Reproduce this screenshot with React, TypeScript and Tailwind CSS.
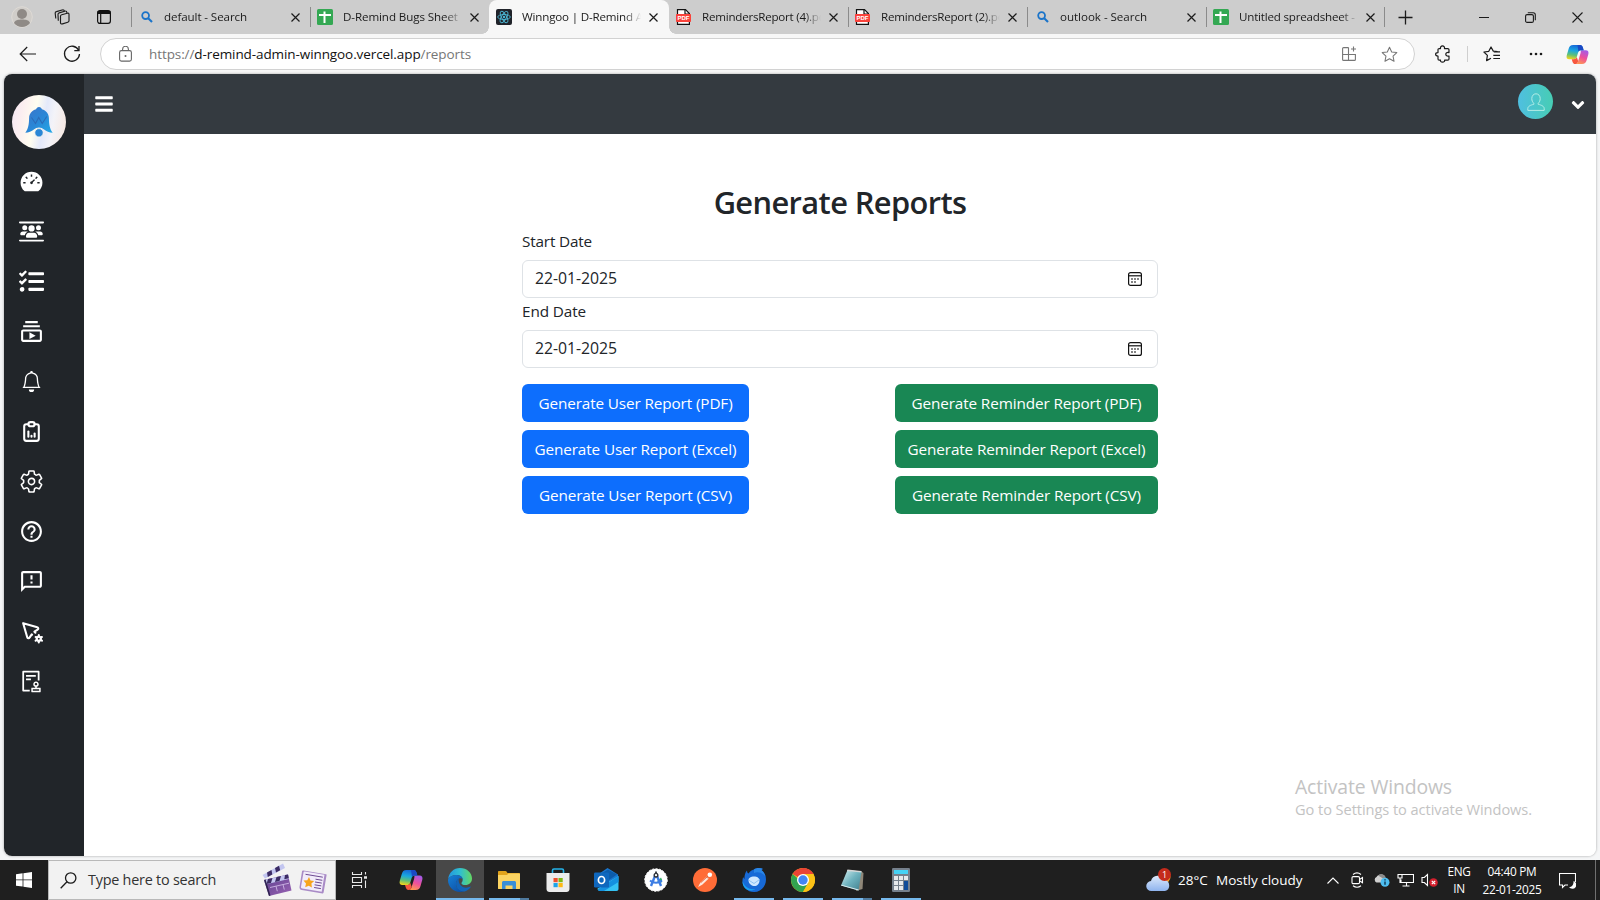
import type { ReactNode } from "react";
import { AiFillDashboard, AiOutlineAudit } from "react-icons/ai";
import { FaUsersBetweenLines } from "react-icons/fa6";
import { FaAngleDown, FaBars, FaTasks } from "react-icons/fa";
import { MdHelpOutline, MdOutlineFeedback, MdOutlineSubscriptions } from "react-icons/md";
import { BsBell } from "react-icons/bs";
import { IoSettingsOutline } from "react-icons/io5";
import { TbPointerCog, TbReportAnalytics } from "react-icons/tb";

/* ---------- browser icons ---------- */

function SearchFavicon() {
  return (
    <svg width="12" height="12" viewBox="0 0 12 12" fill="none" stroke="#1b74c9" strokeWidth="1.8">
      <circle cx="4.6" cy="4.6" r="3.4" />
      <path d="M7.2 7.2 11 11" strokeWidth="2.1" />
    </svg>
  );
}

function SheetFavicon() {
  return (
    <svg width="16" height="16" viewBox="0 0 16 16">
      <rect width="16" height="16" rx="1.5" fill="#34a853" />
      <path d="M2 6h12M7.5 2.5v11.5" stroke="#fff" strokeWidth="2" />
    </svg>
  );
}

function ReactFavicon() {
  return (
    <svg width="16" height="16" viewBox="0 0 16 16" fill="none" stroke="#4cb8d4" strokeWidth="0.9">
      <rect width="16" height="16" rx="2" fill="#20232a" stroke="none" />
      <circle cx="8" cy="8" r="1.2" fill="#4cb8d4" stroke="none" />
      <ellipse cx="8" cy="8" rx="6.3" ry="2.5" />
      <ellipse cx="8" cy="8" rx="6.3" ry="2.5" transform="rotate(60 8 8)" />
      <ellipse cx="8" cy="8" rx="6.3" ry="2.5" transform="rotate(120 8 8)" />
    </svg>
  );
}

function PdfFavicon() {
  return (
    <span className="relative block h-4 w-[15px]">
      <svg width="15" height="16" viewBox="0 0 15 16" className="block">
        <path d="M1.5.6h8l3.9 3.9v10.9H1.5z" fill="#fff" stroke="#111" strokeWidth="1.2" />
        <path d="M9 1v4h4" fill="none" stroke="#111" strokeWidth="1.2" />
        <rect y="5" width="15" height="8" rx="0.8" fill="#f9423a" />
      </svg>
      <span className="absolute inset-x-0 top-[5px] text-center font-['Liberation_Sans'] text-[6px] leading-[8px] font-bold text-white">PDF</span>
    </span>
  );
}

function CloseGlyph() {
  return (
    <svg width="9" height="9" viewBox="0 0 9 9" stroke="#1b1b1b" strokeWidth="1.2">
      <path d="M.5.5l8 8M8.500.5l-8 8" />
    </svg>
  );
}

function CopilotIcon({ size }: { size: number }) {
  return (
    <svg width={size} height={size} viewBox="0 0 24 24">
      <defs>
        <linearGradient id="cpA" x1="0.5" y1="0" x2="0.3" y2="1">
          <stop offset="0" stopColor="#1766d8" />
          <stop offset="0.4" stopColor="#19a7e0" />
          <stop offset="0.7" stopColor="#5cc07a" />
          <stop offset="1" stopColor="#f2d51b" />
        </linearGradient>
        <linearGradient id="cpB" x1="0.7" y1="0" x2="0.3" y2="1">
          <stop offset="0" stopColor="#a45be8" />
          <stop offset="0.5" stopColor="#ee4f9b" />
          <stop offset="1" stopColor="#ff9a4f" />
        </linearGradient>
      </defs>
      <path d="M15 7.5h5.500c2.500 0 3.500 1.700 2.800 4.200l-1.700 6c-.8 2.900-2 4.300-5 4.300H9.500c2 0 2.700-1.600 3.200-3.300l2.300-7.500c.6-1.800.6-3.700 0-3.700z" fill="url(#cpB)" />
      <path d="M7.500 2h7.200c1.600 0 2.400 1.200 2.900 2.800l.8 2.700h-2.700c-1.900 0-2.700 1.300-3.200 3l-1.300 4.200c-.5 1.700-1.500 2.300-3.200 2.300H3.400C.9 17 .1 15.300.8 12.800l1.900-6.500C3.500 3.400 4.600 2 7.500 2z" fill="url(#cpA)" />
      <path d="M14.700 2c1.600 0 2.400 1.200 2.900 2.800l.8 2.700h-2.700c-1.500 0-2.200.6-2.700 1.500L12 2z" fill="#1a49c4" />
      <path d="M9.500 22c-1.600 0-2.300-1.100-2.800-2.700L6 17h2c1.700 0 2.700-.6 3.200-2.300l1.500 4c-.5 1.700-1.200 3.300-3.200 3.300z" fill="#f7573f" />
    </svg>
  );
}

/* ---------- browser chrome ---------- */

type TabInfo = { title: string; icon: ReactNode; text: string; pad: string; line: string };

const tabs: TabInfo[] = [
  { title: "default - Search", icon: <SearchFavicon />, text: "tracking-[-0.1px]", pad: "pl-[9px]", line: "border-[#8b8b8b]" },
  { title: "D-Remind Bugs Sheet", icon: <SheetFavicon />, text: "tracking-[-0.1px]", pad: "pl-[6px]", line: "border-[#8b8b8b]" },
  { title: "Winngoo | D-Remind Admin", icon: <ReactFavicon />, text: "tracking-[-0.18px]", pad: "pl-[7px]", line: "border-transparent" },
  { title: "RemindersReport (4).pdf", icon: <PdfFavicon />, text: "tracking-[-0.23px]", pad: "pl-[6px]", line: "border-transparent" },
  { title: "RemindersReport (2).pdf", icon: <PdfFavicon />, text: "tracking-[-0.23px]", pad: "pl-[6px]", line: "border-[#8b8b8b]" },
  { title: "outlook - Search", icon: <SearchFavicon />, text: "tracking-[-0.04px]", pad: "pl-[9px]", line: "border-[#8b8b8b]" },
  { title: "Untitled spreadsheet - Google", icon: <SheetFavicon />, text: "tracking-[-0.2px]", pad: "pl-[6px]", line: "border-[#8b8b8b]" },
];

function Tab({ tab, active }: { tab: TabInfo; active: boolean }) {
  const body = (
    <>
      <span className={`flex shrink-0 items-center ${active ? "w-[33px]" : "w-8"} ${tab.pad}`}>{tab.icon}</span>
      <span className={`w-[119px] overflow-hidden text-[11.6px] leading-5 whitespace-nowrap text-[#1b1b1b] [mask-image:linear-gradient(to_right,black_86%,transparent)] ${tab.text}`}>{tab.title}</span>
      <span className="ml-[8px] flex">
        <CloseGlyph />
      </span>
    </>
  );
  if (active) {
    return (
      <div className="relative flex h-[34px] w-[180px] shrink-0 items-center rounded-t-[8px] bg-[#f7f7f7]">
        <span className="absolute bottom-0 -left-[7px] size-[7px] bg-[radial-gradient(circle_at_0_0,transparent_6.5px,#f7f7f7_7px)]" />
        <span className="absolute -right-[7px] bottom-0 size-[7px] bg-[radial-gradient(circle_at_100%_0,transparent_6.5px,#f7f7f7_7px)]" />
        {body}
      </div>
    );
  }
  return (
    <div className="flex h-[34px] w-[179px] shrink-0 items-center">
      <span className={`h-5 border-l ${tab.line}`} />
      {body}
    </div>
  );
}

function TabStrip() {
  return (
    <div className="flex h-[34px] items-center bg-[#cdcdcd]">
      <div className="flex w-[131px] shrink-0 items-center">
        <svg width="22" height="22" viewBox="0 0 22 22" className="ml-[11px]">
          <circle cx="11" cy="11" r="10.3" fill="#d0cdc9" stroke="#dedad5" />
          <circle cx="11" cy="8" r="5" fill="#8f8a86" />
          <path d="M3 17c1-3 4-3.500 8-3.500s7 .5 8 3.500c-2 2.500-5 4-8 4s-6-1.500-8-4z" fill="#8f8a86" />
        </svg>
        <svg width="18" height="18" viewBox="0 0 18 18" fill="none" stroke="#1b1b1b" strokeWidth="1.15" strokeLinejoin="round" className="ml-5">
          <path d="M7.5 8.200c0-.8.4-1.300 1.200-1.500l5.600-1.500c1-.3 1.700.2 1.700 1.200v6.300c0 .8-.4 1.300-1.200 1.500l-5.300 1.700c-1.200.4-2-.2-2-1.200z" />
          <path d="M5.300 12.700l-.3-6.200c0-.9.4-1.400 1.200-1.600L12.500 3" />
          <path d="M2.800 10.500l-.6-5.200c-.1-.9.3-1.500 1.200-1.700L10 1.700M12.500 3c.8 0 1.300.6 1.500 2M10 1.700c.8 0 1.200.4 1.400 1.400" />
        </svg>
        <svg width="16" height="16" viewBox="0 0 16 16" fill="none" stroke="#111" strokeWidth="1.2" className="ml-[25px]">
          <rect x="1.600" y="1.600" width="12.800" height="12.800" rx="2.300" />
          <path d="M1.600 3.500h12.800" strokeWidth="3" />
          <path d="M4.700 5v9.500" />
        </svg>
      </div>
      {tabs.map((tab, i) => (
        <Tab key={tab.title} tab={tab} active={i === 2} />
      ))}
      <span className="-ml-px h-5 border-l border-[#8b8b8b]" />
      <svg width="15" height="15" viewBox="0 0 15 15" stroke="#1b1b1b" strokeWidth="1.3" className="ml-[13px]">
        <path d="M7.500.5v14M.5 7.500h14" />
      </svg>
      <div className="ml-auto flex items-center gap-[36px] pr-[17px]">
        <svg width="11" height="10" viewBox="0 0 11 10" stroke="#1b1b1b">
          <path d="M1 5.500h10" />
        </svg>
        <svg width="11" height="11" viewBox="0 0 11 11" fill="none" stroke="#1b1b1b" strokeWidth="1.1">
          <rect x=".6" y="2.600" width="7.800" height="7.800" rx="1.500" />
          <path d="M2.800.7h5.400c1.300 0 2.100.8 2.100 2.100v5.400" />
        </svg>
        <svg width="11" height="11" viewBox="0 0 11 11" stroke="#1b1b1b" strokeWidth="1.1">
          <path d="M.5.5l10 10M10.500.5l-10 10" />
        </svg>
      </div>
    </div>
  );
}

function Toolbar() {
  return (
    <div className="flex h-10 items-center bg-[#f7f7f7]">
      <svg width="18" height="16" viewBox="0 0 18 16" fill="none" stroke="#1b1b1b" strokeWidth="1.2" className="ml-[19px]">
        <path d="M17 8H1.200M8.200 1 1.200 8l7 7" />
      </svg>
      <svg width="18" height="18" viewBox="0 0 18 18" fill="none" stroke="#1b1b1b" strokeWidth="1.3" className="ml-[26px]">
        <path d="M15.700 5.300A7.500 7.500 0 1 0 16.500 9" />
        <path d="M16 1v4.700h-4.700" />
      </svg>
      <div className="ml-[19px] flex h-8 w-[1315px] items-center rounded-full border border-[#d2d2d2] bg-white">
        <svg width="13" height="16" viewBox="0 0 13 16" fill="none" stroke="#666" strokeWidth="1.1" className="ml-[18px]">
          <rect x=".6" y="4.600" width="11.800" height="10.500" rx="1.800" />
          <path d="M3.600 4.500V3.200a2.900 2.900 0 0 1 5.800 0v1.300" />
          <circle cx="6.500" cy="9.900" r="1" fill="#666" stroke="none" />
        </svg>
        <span className="ml-[17px] text-[13.5px] leading-5 tracking-[-0.09px] text-[#767676]">
          https://<span className="text-[#111]">d-remind-admin-winngoo.vercel.app</span>/reports
        </span>
        <div className="ml-auto flex items-center gap-6 pr-[16px]">
          <svg width="16" height="16" viewBox="0 0 16 16" fill="none" stroke="#767676" strokeWidth="1.1">
            <path d="M7.500 1.600H2.600c-.6 0-1 .4-1 1v10.800c0 .6.4 1 1 1h10.800c.6 0 1-.4 1-1V8.500H1.600M7.500 1.600v12.800M12.500.5v5M10 3h5" />
          </svg>
          <svg width="17" height="17" viewBox="0 0 24 24" fill="none" stroke="#767676" strokeWidth="1.5" strokeLinejoin="round">
            <path d="M12 1.800l3.100 6.600 7.200.9-5.300 5 1.400 7.200L12 18l-6.400 3.500L7 14.300l-5.300-5 7.200-.9z" />
          </svg>
        </div>
      </div>
      <svg width="17" height="18" viewBox="0 0 17 18" fill="none" stroke="#1b1b1b" strokeWidth="1.2" strokeLinejoin="round" className="ml-[20px]">
        <path d="M5.500 3.600c-.3-1.700.7-2.700 2-2.700s2.300 1 2 2.700h3.300c.8 0 1.200.4 1.200 1.200v2.800c-2-.5-3.200.4-3.200 1.700s1.200 2.200 3.200 1.700v3c0 .8-.4 1.200-1.200 1.200H9.600c.3 1.200-.7 2-2.100 2s-2.300-.8-2-2H4.200c-.8 0-1.200-.4-1.200-1.200v-3C1.500 11 .6 10.200.6 9.300s.9-1.700 2.400-1.700V4.800c0-.8.4-1.200 1.200-1.200z" />
      </svg>
      <span className="ml-[15px] h-4 border-l border-[#cfcfcf]" />
      <svg width="18" height="17" viewBox="0 0 18 17" fill="none" stroke="#1b1b1b" strokeWidth="1.2" strokeLinejoin="round" className="ml-[15px]">
        <path d="M14.500 5.600l-4.200-.5L8 1 5.800 5.300.9 6l3.500 3.400-.8 5.200L8 12.300M10.800 5.900H17M10.300 9.300H17M10.300 12.500H17" />
      </svg>
      <svg width="14" height="4" viewBox="0 0 14 4" fill="#1b1b1b" className="ml-[28px]">
        <circle cx="2" cy="2" r="1.3" />
        <circle cx="7" cy="2" r="1.3" />
        <circle cx="12" cy="2" r="1.3" />
      </svg>
      <span className="ml-[23px]">
        <CopilotIcon size={23} />
      </span>
    </div>
  );
}

/* ---------- admin page ---------- */

const sideIcons = [
  { Icon: AiFillDashboard, size: 25 },
  { Icon: FaUsersBetweenLines, size: 25 },
  { Icon: FaTasks, size: 25 },
  { Icon: MdOutlineSubscriptions, size: 25 },
  { Icon: BsBell, size: 21 },
  { Icon: TbReportAnalytics, size: 25 },
  { Icon: IoSettingsOutline, size: 25 },
  { Icon: MdHelpOutline, size: 25 },
  { Icon: MdOutlineFeedback, size: 25 },
  { Icon: TbPointerCog, size: 25 },
  { Icon: AiOutlineAudit, size: 25 },
];

function Logo() {
  return (
    <div className="mt-[20.5px] ml-[8px] flex size-[54px] items-center justify-center rounded-full bg-[linear-gradient(100deg,#f3e6f3_0%,#fbeef0_20%,#fffdf0_42%,#e4e9fa_58%,#f3f3f8_72%,#f8e6dc_100%)]">
      <svg width="30" height="32" viewBox="0 0 30 32">
        <defs>
          <linearGradient id="bell" x1="0" y1="0" x2="1" y2="1">
            <stop offset="0" stopColor="#3d74c9" />
            <stop offset="0.5" stopColor="#2a86d6" />
            <stop offset="1" stopColor="#25a9e6" />
          </linearGradient>
        </defs>
        <path d="M15 1c1.600 0 2.600 1 2.900 2.300 4.300 1.200 6.900 4.400 7 8.900.1 6.300.8 10.300 3.800 14.600-3.400-.3-6.300-1.600-8.600-3.300-1.500-1.300-3.200-2-5.100-2s-3.600.7-5.100 2c-2.300 1.700-5.200 3-8.600 3.300 3-4.300 3.700-8.300 3.800-14.600.1-4.500 2.700-7.700 7-8.900C12.400 2 13.400 1 15 1z" fill="url(#bell)" />
        <circle cx="15" cy="26.800" r="4.200" fill="#2a86d6" stroke="#fbf8ec" strokeWidth="0.8" />
        <path d="M7.500 11.500l4 6 3.200-6 3.500 6 4.500-7" fill="none" stroke="#2c6cb8" strokeWidth="1.1" />
      </svg>
    </div>
  );
}

function Sidebar() {
  return (
    <aside className="w-20 shrink-0 bg-[#212529]">
      <Logo />
      <nav className="mt-[8px] flex w-[55px] flex-col text-white">
        {sideIcons.map(({ Icon, size }, i) => (
          <span key={i} className="flex h-[50px] items-center justify-center">
            <Icon size={size} />
          </span>
        ))}
      </nav>
    </aside>
  );
}

function Header() {
  return (
    <header className="flex h-[60px] items-center bg-[#343a40]">
      <FaBars size={20} color="#fff" className="ml-[10px]" />
      <div className="mb-[5px] ml-auto flex size-[35px] items-center justify-center rounded-full bg-[linear-gradient(90deg,#4fbfe0,#47cdb4)]">
        <svg width="18" height="18" viewBox="0 0 18 18" fill="none" stroke="#b4ece6" strokeWidth="1">
          <path d="M6.800 10.200C5.500 9.200 4.800 7.500 4.800 5.600 4.800 2.800 6.500.8 9 .8s4.200 2 4.200 4.800c0 1.900-.7 3.600-2 4.600v1.100c3.400.8 6 2 6 4.300v1.800H.8v-1.800c0-2.300 2.600-3.500 6-4.300z" />
        </svg>
      </div>
      <FaAngleDown size={20} color="#fff" className="mt-[2px] mr-[8px] ml-[15px]" />
    </header>
  );
}

function CalendarIcon() {
  return (
    <svg width="14" height="14" viewBox="0 0 14 14" fill="none" stroke="#111" strokeWidth="1.2">
      <rect x=".6" y=".6" width="12.800" height="12.800" rx="2" />
      <path d="M.6 3.800h12.800" />
      <path d="M3.200 7h1.600M6.200 7h1.600M9.200 7h1.600M3.200 10h1.600M6.200 10h1.600" strokeWidth="1.7" stroke="#333" />
    </svg>
  );
}

function DateField({ label, value, track }: { label: string; value: string; track: string }) {
  return (
    <div>
      <div className={`mb-[7px] pt-px text-[15.3px] leading-6 ${track}`}>{label}</div>
      <div className="flex h-[38px] items-center justify-between rounded-md border border-[#dee2e6] bg-white pr-[15px] pl-3 text-[15.8px] tracking-[-0.05px]">
        <span>{value}</span>
        <CalendarIcon />
      </div>
    </div>
  );
}

const formats = ["PDF", "Excel", "CSV"];

function Reports() {
  return (
    <main className="flex flex-1 justify-center bg-white text-[#212529]">
      <div className="mt-[49px] w-[636px]">
        <h2 className="mb-[7px] text-center text-[30.8px] leading-[38px] font-semibold tracking-[-0.6px]">Generate Reports</h2>
        <DateField label="Start Date" value="22-01-2025" track="tracking-[-0.17px]" />
        <DateField label="End Date" value="22-01-2025" track="tracking-[-0.1px]" />
        <div className="mt-4 flex justify-between text-[15.3px] tracking-[-0.12px] whitespace-nowrap text-white">
          <div className="flex w-[227px] flex-col gap-2">
            {formats.map((f) => (
              <button key={f} className="h-[38px] rounded-md bg-[#0d6efd]">
                Generate User Report ({f})
              </button>
            ))}
          </div>
          <div className="flex w-[263px] flex-col gap-2">
            {formats.map((f) => (
              <button key={f} className="h-[38px] rounded-md bg-[#198754]">
                Generate Reminder Report ({f})
              </button>
            ))}
          </div>
        </div>
      </div>
    </main>
  );
}

/* ---------- taskbar ---------- */

function WindowsLogo() {
  return (
    <svg width="16" height="16" viewBox="0 0 16 16" fill="#fff">
      <path d="M0 2.200 6.600 1.300v6.200H0zM7.400 1.200 16 0v7.500H7.400zM0 8.300h6.600v6.300L0 13.700zM7.400 8.300H16V16l-8.600-1.200z" />
    </svg>
  );
}

function ClapperIcon() {
  return (
    <svg width="30" height="34" viewBox="0 0 30 34">
      <defs>
        <linearGradient id="clap" x1="0" y1="0" x2="1" y2="1">
          <stop offset="0" stopColor="#5b3f8c" />
          <stop offset="1" stopColor="#9a63b4" />
        </linearGradient>
      </defs>
      <path d="M.5 12 21 .5 23 5 3 15.500z" fill="#c3c6f0" />
      <path d="M5 9.500l4.500-2.500.8 4.500-4.500 2.500zM13 5l4-2.300 1.200 4.500-4.200 2.300z" fill="#3c2c64" />
      <path d="M2 17 26 11.500 29.500 27.500 7 33z" fill="url(#clap)" />
      <path d="M2 17 26 11.500l.9 4.500L3.200 21.500z" fill="#c3c6f0" />
      <path d="M6 16l4.500-1-1.500 5-4.500 1zM14.500 14l4.500-1-1.500 5-4.500 1zM23 12l3-.6.8 3.800-4.500 1z" fill="#3c2c64" />
      <path d="M2 17l1.600-.4L8.500 32.600 7 33z" fill="#2f2250" />
      <path d="M8 24.500l19-4.300M14 23.200l1.300 5M21 21.600l1.300 5" stroke="#cdb6e4" strokeWidth="0.9" />
    </svg>
  );
}

function NewspaperIcon() {
  return (
    <svg width="28" height="24" viewBox="0 0 28 24">
      <path d="M4.500.5 27 4.200c.5 0 .7.4.6.8l-3 17.600c-.1.6-.5.9-1 .8L2.800 20C1.300 19.700.3 18.600.5 17L3 1.500c.1-.7.8-1.100 1.500-1z" fill="#a98bc6" />
      <path d="M5.700 1.500 25.500 4.800l-2.800 16.900L3.300 18.400c-.9-.1-1.500-.8-1.300-1.700L4.500 2.400c.1-.6.6-1 1.200-.9z" fill="#f1ebfa" />
      <path d="M6.500 4.300 23.800 7.200M16.500 9.200l6.800 1.100M16 12l6.800 1.100M15.600 14.800l6.700 1.100M15.100 17.500l6.800 1.100" stroke="#6d4a90" strokeWidth="1" />
      <path d="M10 7l1.500 3.500 3.700.5-2.800 2.600.5 4-3.200-1.800-3.500 1.500.8-3.900-2.500-2.900 3.800-.2z" fill="#f7a51c" />
    </svg>
  );
}

function TaskViewIcon() {
  return (
    <svg width="17" height="16" viewBox="0 0 17 16" fill="none" stroke="#e8e8e8" strokeWidth="1.1">
      <path d="M1.500 0v2.500h9V0M1.500 16v-2.500h9V16M1.500 5.500h9v5h-9zM14.500 0v2.500M14.500 8.500v7.500" />
      <path d="M13 5.500h3" strokeWidth="2.5" />
    </svg>
  );
}

function EdgeIcon() {
  return (
    <svg width="24" height="24" viewBox="0 0 24 24">
      <defs>
        <linearGradient id="edTop" x1="0" y1="0.5" x2="1" y2="0.5">
          <stop offset="0" stopColor="#2296e0" />
          <stop offset="0.5" stopColor="#30bfd0" />
          <stop offset="1" stopColor="#64d863" />
        </linearGradient>
        <linearGradient id="edBot" x1="0" y1="0" x2="0.8" y2="1">
          <stop offset="0" stopColor="#1680d6" />
          <stop offset="1" stopColor="#0d4fa5" />
        </linearGradient>
      </defs>
      <path d="M.2 11C.8 4.800 5.700 0 12 0c7 0 12 5 12 10.500 0 4-3 6.500-6.500 6.500-2.600 0-4-.9-4-1.800 0-.7 1.200-1.400 1.200-3.400C14.700 8.900 12 7 8.500 7 4.500 7 1.300 8.800.2 11z" fill="url(#edTop)" />
      <path d="M.2 11C1.300 8.800 4.500 7 8.500 7c3.200 0 5.800 1.500 6.200 4-1-.7-2-.9-3-.7-2 .5-3.700 2.700-3.700 5.400 0 4.300 3.700 7.300 8.200 7.300-1.300.6-2.700 1-4.200 1C5.400 24 0 18.600 0 12z" fill="url(#edBot)" />
      <path d="M8 15.700c0-2.400 1.200-4.300 2.800-5.100-.9 5 2.600 9.200 7.200 9.200 1.800 0 3.200-.6 4.200-1.200.5-.2.7.2.5.5-1.400 2.200-3.500 3.600-6 4.300C12 23.700 8 20.300 8 15.700z" fill="#1264b8" />
    </svg>
  );
}

function ExplorerIcon() {
  return (
    <svg width="22" height="19" viewBox="0 0 22 19">
      <path d="M0 1c0-.6.4-1 1-1h6.500c.5 0 .8.2 1 .5L9.500 2H21c.6 0 1 .4 1 1v14c0 .6-.4 1-1 1H1c-.6 0-1-.4-1-1z" fill="#e2a31b" />
      <path d="M0 4h9l1.500-1.500H21c.6 0 1 .4 1 1V17c0 .6-.4 1-1 1H1c-.6 0-1-.4-1-1z" fill="#fcd462" />
      <path d="M4 18v-6.500c0-.8.7-1.500 1.500-1.500h11c.8 0 1.500.7 1.500 1.500V18h-3.500v-3.500h-7V18z" fill="#3a8fd6" />
    </svg>
  );
}

function StoreIcon() {
  return (
    <svg width="24" height="24" viewBox="0 0 24 24">
      <path d="M6.500 6V2.500c0-.8.7-1.500 1.500-1.500h8c.8 0 1.500.7 1.500 1.500V6" fill="none" stroke="#25b4ea" strokeWidth="1.6" />
      <path d="M.5 5h23v16c0 1.700-1.300 3-3 3h-17c-1.700 0-3-1.300-3-3z" fill="#ececec" />
      <path d="M7.500 10h4.200v4.200H7.500z" fill="#f0502d" />
      <path d="M12.500 10h4.200v4.200h-4.200z" fill="#7fb913" />
      <path d="M7.500 15h4.200v4.200H7.500z" fill="#1ba3e8" />
      <path d="M12.500 15h4.200v4.200h-4.200z" fill="#fdb813" />
    </svg>
  );
}

function OutlookIcon() {
  return (
    <svg width="25" height="24" viewBox="0 0 25 24">
      <path d="M4 6.500 13.500 0 24 6.500V15H4z" fill="#1a78d0" />
      <path d="M8 5 14 1.500l9 5L15 12 8 9z" fill="#0c5cab" />
      <path d="M24.500 8v13c0 1-.8 2-2 2H6c-1.500 0-2.500-1-2.500-2.500z" fill="#35c2f3" />
      <path d="M24.500 8v6L10 23H6c-1 0-2-.6-2.300-1.500z" fill="#1490df" />
      <rect y="4.500" width="15" height="15" rx="1.2" fill="#0f67bd" />
      <ellipse cx="7.500" cy="12" rx="3.100" ry="3.500" fill="none" stroke="#fff" strokeWidth="1.7" />
    </svg>
  );
}

function StudioIcon() {
  return (
    <svg width="24" height="24" viewBox="0 0 24 24">
      <circle cx="12" cy="12" r="11.3" fill="#fff" stroke="#f4f4f4" strokeDasharray="2 1.5" />
      <path d="M17 9.500a5.500 5.500 0 0 1 .8 5l-4.800-1z" fill="#2fae63" />
      <path d="M11 8 7 18M13 8l4 10" stroke="#3d7de4" strokeWidth="2.4" />
      <path d="M6 12.500c3 3 9 3 12 0" fill="none" stroke="#3d7de4" strokeWidth="1.8" />
      <circle cx="12" cy="7.200" r="1.800" fill="#fff" stroke="#30343a" strokeWidth="1.4" />
      <path d="M12 3.500v2" stroke="#30343a" strokeWidth="1.8" />
    </svg>
  );
}

function PostmanIcon() {
  return (
    <svg width="24" height="24" viewBox="0 0 24 24">
      <circle cx="12" cy="12" r="12" fill="#ff6c37" />
      <path d="M5 19l2.300-4.200 6.500-6.200 2 2-6.600 6.200z" fill="#fde8de" />
      <path d="M13.500 8.800l1.800 1.900M8 14.500l7-6.300" stroke="#d9542a" strokeWidth="0.7" />
      <circle cx="16.800" cy="6.700" r="2.300" fill="#fff" />
    </svg>
  );
}

function ThunderbirdIcon() {
  return (
    <svg width="24" height="24" viewBox="0 0 24 24">
      <path d="M12 1.500c2-1.500 6-2 9-.5-1 .2-1.500.6-1.700 1 3 2 4.700 5.500 4.700 9.500 0 7-5.300 12.500-12 12.500S.5 19 .5 13c0-1.500.3-3 .8-4 .2 1 .7 1.500 1.200 2C2.300 8 3 4.500 5 2.500c0 1.500.5 2.500 1.500 3C8 3 10 2 12 1.500z" fill="#1769d6" />
      <path d="M12 1.500c2-1.500 6-2 9-.5-1 .2-1.500.6-1.700 1 2 1.500 3.500 4 4.200 6.500-3-4-8-5-11.500-3.500z" fill="#2a86e6" />
      <path d="M.5 13c2 6 7 9 13 8-4 3-13 2-13-8z" fill="#1aa0f0" />
      <path d="M6.500 12c0-2 2.500-3.500 5.500-3.500s5.500 1.500 5.500 4c0 3.500-2.500 5.500-5 5.500s-6-2-6-6z" fill="#cfe7ff" />
      <path d="M6.500 12l5.500 3.500 5.500-4" fill="none" stroke="#8ec2f2" />
    </svg>
  );
}

function ChromeIcon() {
  return (
    <svg width="24" height="24" viewBox="0 0 24 24">
      <circle cx="12" cy="12" r="12" fill="#fbc116" />
      <path d="M12 12 1.610 6A12 12 0 0 1 22.390 6z" fill="#ea4335" />
      <path d="M12 0a12 12 0 0 1 10.390 6H12z" fill="#ea4335" />
      <path d="M1.610 6A12 12 0 0 0 12 24l5.200-9H12z" fill="#32a350" />
      <path d="M12 24a12 12 0 0 0 10.390-18H12l5.200 9z" fill="#fbc116" />
      <circle cx="12" cy="12" r="6" fill="#fff" />
      <circle cx="12" cy="12" r="4.700" fill="#4285f4" />
    </svg>
  );
}

function NotepadIcon() {
  return (
    <svg width="24" height="24" viewBox="0 0 24 24">
      <defs>
        <linearGradient id="note" x1="0" y1="0" x2="1" y2="1">
          <stop offset="0" stopColor="#d9f1f3" />
          <stop offset="0.5" stopColor="#6fb3bf" />
          <stop offset="1" stopColor="#3f7d8c" />
        </linearGradient>
      </defs>
      <path d="M20.500 3 23.500 5 22.500 21 16 23z" fill="#8f8778" />
      <path d="M7.500 2 21.500 3.500 18.500 22.500 1 17.500z" fill="url(#note)" />
      <path d="M7.500 1.500 21.500 3v1.500L7 3z" fill="#d7d7d7" />
      <path d="M1 17.500 18.500 22.500l.2-1L1.500 16.700z" fill="#dfeef0" />
    </svg>
  );
}

function CalculatorIcon() {
  return (
    <svg width="18" height="24" viewBox="0 0 18 24">
      <rect width="18" height="24" rx="1.2" fill="#75808c" />
      <rect x="2" y="2" width="14" height="4" fill="#45d2f5" />
      <path d="M2 8h4v4H2zM7 8h4v4H7zM12 8h4v4h-4zM2 13h4v4H2zM7 13h4v4H7zM2 18h4v4H2zM7 18h4v4H7z" fill="#e6e9ec" />
      <path d="M12 13h4v9h-4z" fill="#0f4c9a" />
    </svg>
  );
}

type TaskbarEntry = { icon: ReactNode; state: "idle" | "running" | "stacked" | "active" };

const apps: TaskbarEntry[] = [
  { icon: <CopilotIcon size={24} />, state: "idle" },
  { icon: <EdgeIcon />, state: "active" },
  { icon: <ExplorerIcon />, state: "stacked" },
  { icon: <StoreIcon />, state: "idle" },
  { icon: <OutlookIcon />, state: "idle" },
  { icon: <StudioIcon />, state: "idle" },
  { icon: <PostmanIcon />, state: "idle" },
  { icon: <ThunderbirdIcon />, state: "running" },
  { icon: <ChromeIcon />, state: "running" },
  { icon: <NotepadIcon />, state: "stacked" },
  { icon: <CalculatorIcon />, state: "running" },
];

const barStyles = {
  idle: "w-10",
  running: "w-10 bg-[#76b9ed]",
  stacked: "w-10 border-r-9 border-[#4f7a9e] bg-[#76b9ed]",
  active: "w-12 bg-[#76b9ed]",
};

function TaskbarApp({ app }: { app: TaskbarEntry }) {
  return (
    <div className="flex w-[49px] shrink-0 justify-center">
      <div className={`flex h-10 w-12 flex-col items-center ${app.state === "active" ? "bg-[#484848]" : ""}`}>
        <span className="flex h-[38px] items-center pt-[2px]">{app.icon}</span>
        <span className={`h-[2px] ${barStyles[app.state]}`} />
      </div>
    </div>
  );
}

function Tray() {
  return (
    <div className="ml-auto flex items-center text-white">
      <div className="relative">
        <svg width="26" height="24" viewBox="0 0 26 24">
          <defs>
            <linearGradient id="cloud" x1="0" y1="0" x2="0" y2="1">
              <stop offset="0" stopColor="#dce9fb" />
              <stop offset="1" stopColor="#8fb4ee" />
            </linearGradient>
          </defs>
          <circle cx="18.500" cy="9" r="6" fill="#f4a024" />
          <path d="M5.500 23a5 5 0 0 1-.5-10 7 7 0 0 1 13.200-1A5.600 5.600 0 0 1 19 23z" fill="url(#cloud)" />
        </svg>
        <span className="absolute top-0 left-[12px] size-[13px] rounded-full bg-[#c42b1c] text-center text-[9px] leading-[13px]">1</span>
      </div>
      <span className="ml-[6px] w-[38px] text-[13.5px]">28°C</span>
      <span className="w-[88px] text-[13.5px] whitespace-nowrap">Mostly cloudy</span>
      <svg width="12" height="7" viewBox="0 0 12 7" fill="none" stroke="#fff" strokeWidth="1.1" className="ml-[23px]">
        <path d="M.5 6.500 6 1l5.500 5.500" />
      </svg>
      <svg width="13" height="16" viewBox="0 0 13 16" fill="none" stroke="#fff" strokeWidth="1.1" className="ml-[12px]">
        <rect x="1" y="4.600" width="7.500" height="7" rx="1.200" />
        <path d="M8.500 7.500 11.500 5.500v5.300l-3-2M2 2.500C4.500.5 7.500.5 10 2.500M2 13.700c2.500 2 5.500 2 8 0" />
      </svg>
      <svg width="17" height="14" viewBox="0 0 17 14" className="ml-[9px]">
        <path d="M3.500 9.500a3 3 0 0 1 0-5.500A5 5 0 0 1 12 3.500l.5 6z" fill="#d0d0d0" />
        <path d="M5 2.500A4.800 4.800 0 0 1 13 5.500L11 6z" fill="#8c8c8c" />
        <circle cx="12" cy="9.300" r="4.500" fill="#4dbdf0" />
        <path d="M12 8.500v3.300M12 6.300v1.200" stroke="#0b2c44" strokeWidth="1.3" />
      </svg>
      <svg width="17" height="14" viewBox="0 0 17 14" fill="none" stroke="#fff" strokeWidth="1.1" className="ml-[7px]">
        <path d="M5.500 1.500h11v8H4V6.500M1 1.500h4v3.500H1zM3 5v4.500h1M9.500 9.500v3.500M5.500 13h7" />
      </svg>
      <svg width="17" height="14" viewBox="0 0 17 14" fill="none" stroke="#fff" strokeWidth="1.1" className="ml-[7px]">
        <path d="M1 4.500h2.300L6.500 1.500v11L3.300 9.500H1z" />
        <circle cx="12.500" cy="9.500" r="4.300" fill="#d3202e" stroke="none" />
        <path d="M10.800 7.800l3.400 3.400M14.200 7.800l-3.400 3.400" strokeWidth="1.2" />
      </svg>
      <div className="ml-[8px] flex w-[26px] flex-col items-center text-[11.8px] leading-[17px] tracking-[-0.35px]">
        <span>ENG</span>
        <span>IN</span>
      </div>
      <div className="ml-[9px] flex w-[62px] flex-col items-center text-[11.8px] leading-[18px] tracking-[-0.25px] whitespace-nowrap">
        <span>04:40 PM</span>
        <span>22-01-2025</span>
      </div>
      <svg width="17" height="17" viewBox="0 0 17 17" fill="none" stroke="#fff" strokeWidth="1.1" className="ml-[16px]">
        <path d="M9 13H6L3.500 15.500V13h-3V1.500h16V10" />
        <path d="M14.500 9a4 4 0 1 1-4.500 6c3 .3 4.800-2.500 4.500-6z" fill="#fff" stroke="none" />
      </svg>
      <span className="mr-1 ml-[19px] h-10 border-l border-[#707070]" />
    </div>
  );
}

function Taskbar() {
  return (
    <footer className="flex h-10 items-center bg-[#1f1f1f]">
      <div className="flex w-12 shrink-0 justify-center">
        <WindowsLogo />
      </div>
      <div className="flex h-10 w-72 shrink-0 items-center border border-[#b9b9b9] bg-[#f2f2f2]">
        <svg width="17" height="17" viewBox="0 0 17 17" fill="none" stroke="#1b1b1b" strokeWidth="1.3" className="ml-[11px]">
          <circle cx="10.700" cy="6" r="5.200" />
          <path d="M7 9.800.7 16.200" />
        </svg>
        <span className="ml-[11px] text-[14.4px] tracking-[-0.23px] text-[#333]">Type here to search</span>
        <span className="ml-auto">
          <ClapperIcon />
        </span>
        <span className="mt-[3px] mr-[8px] ml-[7px]">
          <NewspaperIcon />
        </span>
      </div>
      <div className="flex w-[50px] shrink-0 justify-center pr-[3px]">
        <TaskViewIcon />
      </div>
      {apps.map((app, i) => (
        <TaskbarApp key={i} app={app} />
      ))}
      <Tray />
    </footer>
  );
}

export default function App() {
  return (
    <div className="relative flex h-[900px] w-[1600px] flex-col overflow-hidden bg-[#f5f6f7] font-['Open_Sans',sans-serif]">
      <TabStrip />
      <Toolbar />
      <div className="mx-1 mb-1 flex h-[782px] shrink-0 overflow-hidden rounded-lg bg-white shadow-[0_0_2px_1px_rgba(0,0,0,0.16)]">
        <Sidebar />
        <div className="flex flex-1 flex-col">
          <Header />
          <Reports />
        </div>
      </div>
      <Taskbar />
      <div className="absolute top-[773px] left-[1295px] text-[#c3c3c3]">
        <div className="text-[19.4px] leading-7 tracking-[-0.14px]">Activate Windows</div>
        <div className="-mt-px text-[14.6px] leading-[18px] tracking-[-0.06px]">Go to Settings to activate Windows.</div>
      </div>
    </div>
  );
}
